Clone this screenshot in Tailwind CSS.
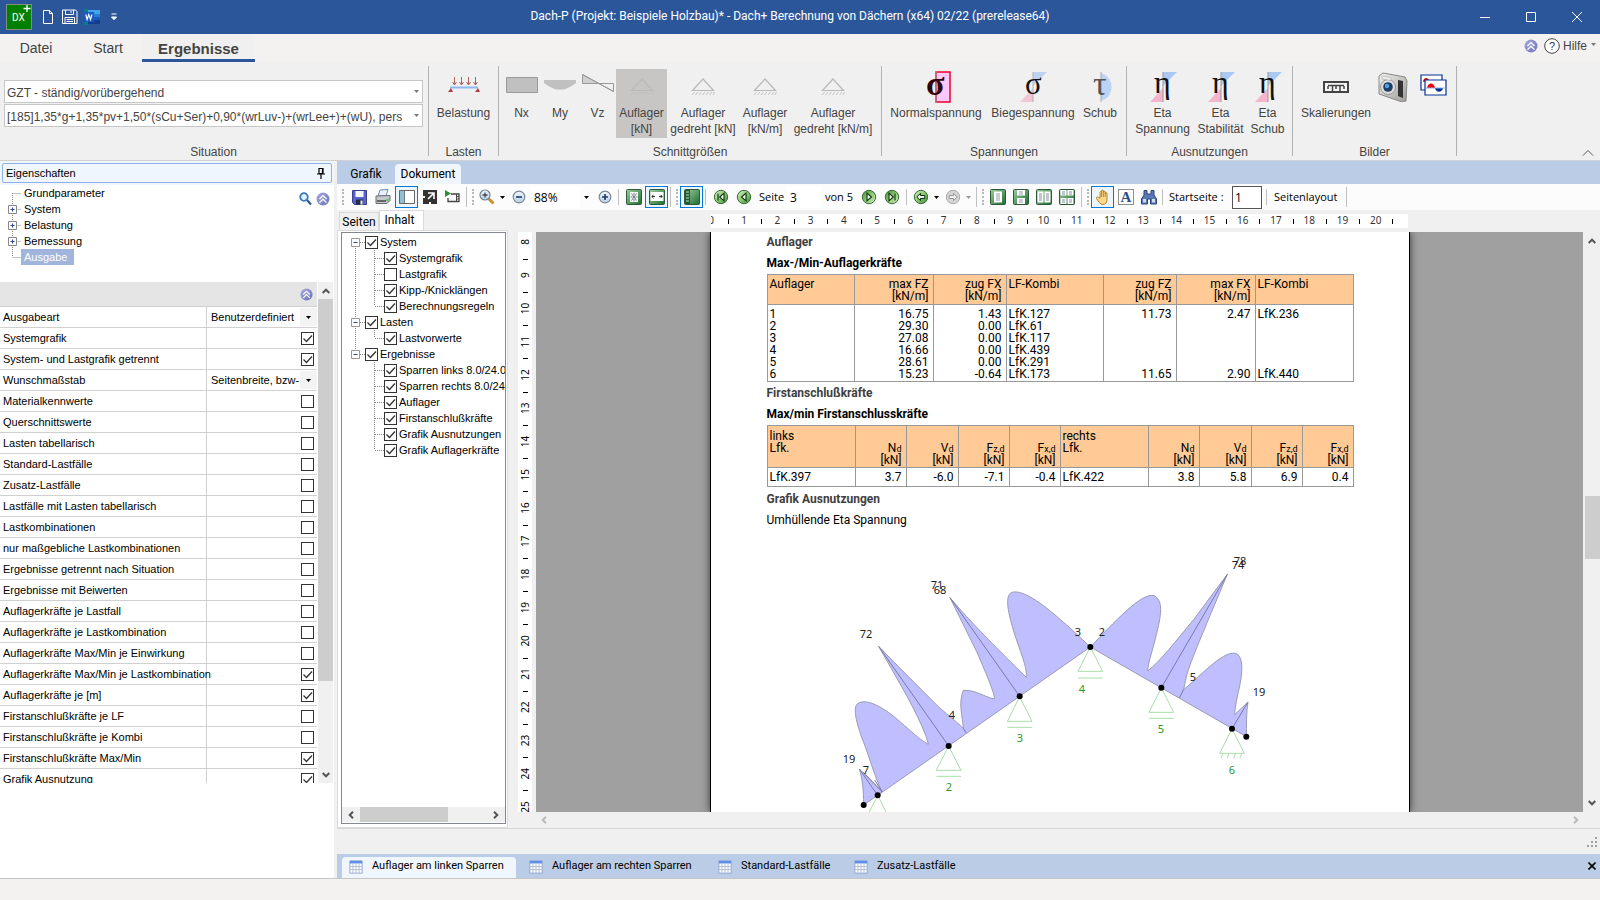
<!DOCTYPE html>
<html lang="de">
<head>
    <meta charset="UTF-8">
    <meta name="viewport" content="width=device-width, initial-scale=1.0">
    <script src="https://cdn.jsdelivr.net/npm/@tailwindcss/browser@4"></script>
    <title>Dach-P - Dach+ Berechnung von Dächern</title>
</head>
<body class="h-screen flex flex-col overflow-hidden bg-[#f0f0f0] font-['Roboto','Liberation_Sans',sans-serif] text-[11px] text-black">

    <!-- Icon definitions -->
    <svg class="absolute w-0 h-0">
        <defs>
            <linearGradient id="gGreen" x1="0" y1="0" x2="1" y2="1"><stop offset="0" stop-color="#d8f0c8"/><stop offset=".5" stop-color="#8cc870"/><stop offset="1" stop-color="#3f8a3f"/></linearGradient>
            <linearGradient id="gPage" x1="0" y1="0" x2="1" y2="1"><stop offset="0" stop-color="#9ccf9c"/><stop offset="1" stop-color="#1f6b34"/></linearGradient>
            <linearGradient id="gBlue" x1="0" y1="0" x2="1" y2="1"><stop offset="0" stop-color="#a8a8e0"/><stop offset="1" stop-color="#6a76b8"/></linearGradient>
            <linearGradient id="gLens" x1="0" y1="0" x2="0" y2="1"><stop offset="0" stop-color="#f4faff"/><stop offset="1" stop-color="#b4cfe8"/></linearGradient>
            <linearGradient id="gSilver" x1="0" y1="0" x2="1" y2="1"><stop offset="0" stop-color="#f4f4f2"/><stop offset="1" stop-color="#9c9a94"/></linearGradient>
        </defs>
        <symbol id="i-collapse" viewBox="0 0 14 14"><circle cx="7" cy="7" r="6.5" fill="url(#gBlue)"/><path d="M3.5 7 7 3.6 10.5 7M3.5 10.6 7 7.2l3.5 3.4" fill="none" stroke="#fff" stroke-width="1.3"/></symbol>
        <symbol id="i-caret" viewBox="0 0 5 3"><path d="M0 0h5L2.500 3z" fill="currentColor"/></symbol>
        <symbol id="i-up" viewBox="0 0 8 6"><path d="M.7 5 4 1.700 7.300 5" fill="none" stroke="currentColor" stroke-width="2"/></symbol>
        <symbol id="i-support" viewBox="0 0 24 18"><path d="M12 1 1.500 12.500h21z" fill="none" stroke="currentColor" stroke-width="1.200"/><path d="m1 17 2.500-3m1 3L7 14m1 3 2.500-3m1 3 2.500-3m1 3 2.500-3m1 3 2.500-3m1 3 1.500-3" stroke="currentColor" stroke-width=".8"/></symbol>
        <symbol id="i-eta" viewBox="0 0 28 32"><path d="M14 1h14L14 15z" fill="#a9c8f2"/><path d="M14 17v14H1z" fill="#f5b4cb"/><path d="M14 1v30" stroke="#999" stroke-width="1"/></symbol>
        <symbol id="i-first" viewBox="0 0 16 16"><circle cx="8" cy="8" r="6.700" fill="url(#gGreen)" stroke="#3b6b3b"/><path d="M5 4.500v7M11 4.200v7.600L6.700 8z" fill="#eef8e6" stroke="#0d2f12" stroke-width="1.100"/></symbol>
        <symbol id="i-prev" viewBox="0 0 16 16"><circle cx="8" cy="8" r="6.700" fill="url(#gGreen)" stroke="#3b6b3b"/><path d="M10 4.200v7.600L5.500 8z" fill="#eef8e6" stroke="#0d2f12" stroke-width="1.100"/></symbol>
        <symbol id="i-back" viewBox="0 0 16 16"><circle cx="8" cy="8" r="6.700" fill="url(#gGreen)" stroke="#3b6b3b"/><path d="M3.800 8 7.500 4.400v2.100h4.200v3H7.500v2.100z" fill="#eef8e6" stroke="#0d2f12"/></symbol>
        <symbol id="i-fwd" viewBox="0 0 16 16"><circle cx="8" cy="8" r="6.700" fill="#d4d4d4" stroke="#a8a8a8"/><path d="M12.200 8 8.500 4.400v2.100H4.300v3h4.200v2.100z" fill="#eee" stroke="#999"/></symbol>
        <symbol id="i-round" viewBox="0 0 14 14"><circle cx="7" cy="7" r="5.800" fill="url(#gLens)" stroke="#7d8894" stroke-width="1.200"/></symbol>
        <symbol id="i-page" viewBox="0 0 16 16"><rect x=".5" y=".5" width="15" height="15" rx="1" fill="url(#gPage)" stroke="#2c5a38"/></symbol>
        <symbol id="i-grid" viewBox="0 0 16 16"><path d="M1 1h14v14H1z" fill="#fff" stroke="#8ba0c8"/><path d="M1 1h14v3H1z" fill="#5f8fe8"/><path d="M1 7.500h14M1 11h14M4.500 4.500V15M8 4.500V15M11.500 4.500V15" stroke="#aab8d4"/></symbol>
        <symbol id="i-tick" viewBox="0 0 13 13"><path d="m2.500 6.500 3 3L11 3.500" fill="none" stroke="#333" stroke-width="1.300"/></symbol>
    </svg>

    <!-- Title bar -->
    <header class="h-[34px] shrink-0 flex items-center bg-[#2b579a] text-white">
        <div class="ml-1.5 w-[26px] h-[26px] bg-[#008000] border border-[#7f8f7f] flex">
            <svg viewBox="0 0 24 24" class="w-6 h-6"><text x="5" y="16" font-size="10" fill="#fff" font-family="Roboto">DX</text><path d="M20 0v7M16.500 3.500h7" stroke="#fff" stroke-width="1.300"/></svg>
        </div>
        <button class="ml-[10px] w-3" aria-label="Neu"><svg viewBox="0 0 12 16" class="w-3 h-4"><path d="M1.500 1.500h6l3 3v10h-9zM7.500 1.500v3h3" fill="none" stroke="#fff"/></svg></button>
        <button class="ml-2 w-4" aria-label="Speichern"><svg viewBox="0 0 16 16" class="w-4 h-4"><path d="M.5 1h13l1.500 1.500V14.500H.5zM3.500 1v4.500h8V1M3 14.500V8.500h9.500v6M4.500 10.500h6.500M4.500 12.500h6.500M9 2v2" fill="none" stroke="#fff"/></svg></button>
        <button class="ml-1.5 w-4" aria-label="Word"><svg viewBox="0 0 16 16" class="w-4 h-4"><path d="M4 1h12v4H4z" fill="#41a5ee"/><path d="M4 5h12v3H4z" fill="#2b7cd3"/><path d="M4 8h12v3H4z" fill="#185abd"/><path d="M4 11h12v4H4z" fill="#103f91"/><path d="M0 0h4v16H0z" fill="#0a7d8c"/><path d="M0 3h10v10H0z" fill="#185abd"/><path d="m1.800 5.500 1.300 5 1.700-5 1.700 5 1.400-5" fill="none" stroke="#fff" stroke-width="1.200"/></svg></button>
        <button class="ml-[10px] w-2" aria-label="Mehr"><svg viewBox="0 0 8 8" class="w-2 h-2"><path d="M1.500 1h5M1.500 4h5L4 6.700z" fill="#fff" stroke="#fff"/></svg></button>
        <h1 class="flex-1 text-center text-[12px] leading-4 pb-0.5">Dach-P (Projekt: Beispiele Holzbau)* - Dach+ Berechnung von Dächern (x64) 02/22 (prerelease64)</h1>
        <button class="w-[46px] flex justify-center" aria-label="Minimieren"><svg viewBox="0 0 10 10" class="w-[10px] h-[10px]"><path d="M0 5.500h10" stroke="#fff"/></svg></button>
        <button class="w-[46px] flex justify-center" aria-label="Maximieren"><svg viewBox="0 0 10 10" class="w-[10px] h-[10px]"><path d="M.5.5h9v9h-9z" fill="none" stroke="#fff"/></svg></button>
        <button class="w-[46px] flex justify-center" aria-label="Schließen"><svg viewBox="0 0 10 10" class="w-[10px] h-[10px]"><path d="m0 0 10 10M10 0 0 10" stroke="#fff"/></svg></button>
    </header>

    <!-- Ribbon tabs -->
    <nav class="h-7 shrink-0 flex bg-[#f3f2f1] text-[#444] text-[14px] leading-7 font-['Liberation_Sans',sans-serif]">
        <button class="ml-[5px] w-[62px] h-7">Datei</button>
        <button class="ml-[10px] w-[62px] h-7">Start</button>
        <button class="ml-[3px] w-[113px] h-7 bg-[#f0f0f0] border-b-3 border-[#2b579a] font-bold text-[15px] leading-[25px] pt-0.5">Ergebnisse</button>
        <div class="ml-auto h-6 flex items-center text-[12px]">
            <svg class="w-[14px] h-[14px] mr-1.5"><use href="#i-collapse"/></svg>
            <svg viewBox="0 0 16 16" class="w-4 h-4 mr-[3px]"><circle cx="8" cy="8" r="7.300" fill="#fff" stroke="#444"/><text x="8" y="12" font-size="11" text-anchor="middle" fill="#333" font-family="Liberation Sans">?</text></svg>
            <button class="flex items-center">Hilfe<svg class="w-[5px] h-[3px] ml-1 mr-1 mb-1 text-[#777]"><use href="#i-caret"/></svg></button>
        </div>
    </nav>

    <!-- Ribbon -->
    <section class="h-[99px] shrink-0 flex border-b border-[#d0d0d0] text-[#444] text-[12px] leading-4 text-center font-['Liberation_Sans',sans-serif]">
        <div class="w-[428px] flex flex-col pt-[18px] pl-1 pr-[5px]">
            <div class="relative h-[23px]">
                <select aria-label="Bemessungssituation" class="appearance-none w-full h-[23px] pl-0.5 pr-4 pt-0.5 bg-white border border-[#c6c6c6] text-[#444]"><option>GZT - ständig/vorübergehend</option></select>
                <svg class="absolute right-1 top-[10px] w-[5px] h-[3px] text-[#777]"><use href="#i-caret"/></svg>
            </div>
            <div class="relative mt-px h-[23px]">
                <select aria-label="Lastfallkombination" class="appearance-none w-full h-[23px] pl-0.5 pr-4 pt-0.5 bg-white border border-[#c6c6c6] text-[#444]"><option>[185]1,35*g+1,35*pv+1,50*(sCu+Ser)+0,90*(wrLuv-)+(wrLee+)+(wU), pers</option></select>
                <svg class="absolute right-1 top-[10px] w-[5px] h-[3px] text-[#777]"><use href="#i-caret"/></svg>
            </div>
            <div class="mt-auto">Situation</div>
        </div>
        <div class="w-px my-1 bg-[#b1b1b1]"></div>
        <div class="w-[69px] flex flex-col pt-[7px]">
            <div class="flex justify-center h-[69px] items-start">
                <button><div class="h-9 flex items-center justify-center pb-1"><svg viewBox="0 0 32 16" class="w-8 h-4"><path d="M2 10.500h28" stroke="#8fb8f0" stroke-width="2"/><path d="M6.500 0v7M13.500 0v7M20.500 0v7M27.500 0v7M4.500 5l2 3 2-3M11.500 5l2 3 2-3M18.500 5l2 3 2-3M25.500 5l2 3 2-3" stroke="#a86060" fill="none"/><path d="m0 15 3-4 2 4zM27 15l3-4 2 4z" fill="#b04040"/></svg></div>Belastung</button>
            </div>
            <div class="mt-auto">Lasten</div>
        </div>
        <div class="w-px my-1 bg-[#b1b1b1]"></div>
        <div class="w-[382px] flex flex-col pt-[7px]">
            <div class="flex pl-[3px] h-[69px] items-start">
                <button class="w-[39px]"><div class="h-9 flex items-center justify-center pb-1"><svg viewBox="0 0 32 16" class="w-8 h-4"><path d="M.5.5h31v15H.5z" fill="#c0c0c0" stroke="#999"/></svg></div>Nx</button>
                <button class="w-[38px]"><div class="h-9 flex items-center justify-center pb-1"><svg viewBox="0 0 32 10" class="w-8 h-[10px]"><path d="M0 0h32v3l-6 4-6 2.500h-8L6 7 0 3z" fill="#c0c0c0"/></svg></div>My</button>
                <button class="w-[37px]"><div class="h-9 flex items-center justify-center pb-2"><svg viewBox="0 0 32 18" class="w-8 h-[18px]"><path d="M.5.5v9h16z" fill="#d0d0d0"/><path d="M.5.5v9h31v8zM.5.5l31 17" fill="none" stroke="#999"/></svg></div>Vz</button>
                <button class="w-[51px] h-[69px] bg-[#c8c6c4] flex flex-col items-center"><div class="h-9 flex items-center"><svg class="w-6 h-[18px] text-[#bababa]"><use href="#i-support"/></svg></div>Auflager<br>[kN]</button>
                <button class="w-[72px]"><div class="h-9 flex items-center justify-center"><svg class="w-6 h-[18px] text-[#b8b8b8]"><use href="#i-support"/></svg></div>Auflager<br>gedreht [kN]</button>
                <button class="w-[52px]"><div class="h-9 flex items-center justify-center"><svg class="w-6 h-[18px] text-[#b8b8b8]"><use href="#i-support"/></svg></div>Auflager<br>[kN/m]</button>
                <button class="w-[84px]"><div class="h-9 flex items-center justify-center"><svg class="w-6 h-[18px] text-[#b8b8b8]"><use href="#i-support"/></svg></div>Auflager<br>gedreht [kN/m]</button>
            </div>
            <div class="mt-auto">Schnittgrößen</div>
        </div>
        <div class="w-px my-1 bg-[#b1b1b1]"></div>
        <div class="w-[244px] flex flex-col pt-[7px]">
            <div class="flex pl-1 h-[69px] items-start">
                <button class="w-[100px]"><div class="h-9 flex items-center justify-center"><svg viewBox="0 0 28 32" class="w-7 h-8 overflow-visible"><path d="M14 1h14v30H14z" fill="#fcc8f8" stroke="#f00030" stroke-width="1.500"/><path d="M14 0v32" stroke="#999"/><text x="4" y="24" font-size="34" font-weight="bold" fill="#300008" font-family="Liberation Serif">σ</text></svg></div>Normalspannung</button>
                <button class="w-[94px]"><div class="h-9 flex items-center justify-center"><svg viewBox="0 0 28 32" class="w-7 h-8 overflow-visible"><g opacity=".7"><use href="#i-eta" width="28" height="32"/></g><text x="6" y="23" font-size="31" fill="#111" font-family="Liberation Serif">σ</text></svg></div>Biegespannung</button>
                <button class="w-10"><div class="h-9 flex items-center justify-center"><svg viewBox="0 0 24 32" class="w-6 h-8 overflow-visible"><path d="M13 2c14 4 14 24 0 28z" fill="#bcd4f4"/><path d="M13 1v30" stroke="#aaa"/><text x="5" y="24" font-size="34" fill="#555" font-family="Liberation Serif">τ</text></svg></div>Schub</button>
            </div>
            <div class="mt-auto">Spannungen</div>
        </div>
        <div class="w-px my-1 bg-[#b1b1b1]"></div>
        <div class="w-[165px] flex flex-col pt-[7px]">
            <div class="flex justify-center h-[69px] items-start">
                <button class="w-[60px]"><div class="h-9 flex items-center justify-center"><svg viewBox="0 0 28 32" class="w-7 h-8 overflow-visible"><use href="#i-eta" width="28" height="32"/><text x="5" y="22" font-size="32" fill="#111" font-family="Liberation Serif">η</text></svg></div>Eta<br>Spannung</button>
                <button class="w-[56px]"><div class="h-9 flex items-center justify-center"><svg viewBox="0 0 28 32" class="w-7 h-8 overflow-visible"><use href="#i-eta" width="28" height="32"/><text x="5" y="22" font-size="32" fill="#111" font-family="Liberation Serif">η</text></svg></div>Eta<br>Stabilität</button>
                <button class="w-[38px]"><div class="h-9 flex items-center justify-center"><svg viewBox="0 0 28 32" class="w-7 h-8 overflow-visible"><use href="#i-eta" width="28" height="32"/><text x="5" y="22" font-size="32" fill="#111" font-family="Liberation Serif">η</text></svg></div>Eta<br>Schub</button>
            </div>
            <div class="mt-auto">Ausnutzungen</div>
        </div>
        <div class="w-px my-1 bg-[#b1b1b1]"></div>
        <div class="w-[163px] flex flex-col pt-[7px]">
            <div class="flex pl-1.5 h-[69px] items-start">
                <button class="w-[74px]"><div class="h-9 flex items-center justify-center"><svg viewBox="0 0 26 12" class="w-[26px] h-3"><path d="M1 1h24v10H1z" fill="#f4f4f4" stroke="#444" stroke-width="2"/><path d="M5 4.500h16M9.500 5v6M13 5v3M17 5v6M5 5v3M21 5v3" stroke="#444" stroke-width="1.500"/></svg></div>Skalierungen</button>
                <button class="w-10" aria-label="Kamera"><div class="h-9 flex items-center justify-center"><svg viewBox="0 0 30 30" class="w-[30px] h-[30px]"><path d="m1 4 4-3 22 4 2 4-1 20-4 1L1 22z" fill="url(#gSilver)" stroke="#888"/><path d="m20 8 5 1v17l-5-2z" fill="#333"/><circle cx="10" cy="15" r="7.500" fill="#ddd" stroke="#999"/><circle cx="10" cy="15" r="4.800" fill="#1d3f66"/><circle cx="9" cy="14" r="2.200" fill="#58a0e0"/><path d="m4 4 9 1.500v3L4 7z" fill="#eee" stroke="#aaa" stroke-width=".6"/></svg></div></button>
                <button class="w-10" aria-label="Bilder"><div class="h-9 flex items-center justify-center pb-1"><svg viewBox="0 0 27 22" class="w-[27px] h-[22px]"><path d="M1 1h21v15H1z" fill="#fff" stroke="#003098" stroke-width="1.200"/><path d="M3 8c0-5 6-5 6-1z" fill="#f00000"/><path d="M5 6h21v15H5z" fill="#fff" stroke="#003098" stroke-width="1.200"/><path d="M7 14c1-6 7-6 8 0z" fill="#f00000"/><path d="M15 14c1 5 7 5 8 0z" fill="#003098"/><path d="M6 14h19" stroke="#90b0e8"/></svg></div></button>
            </div>
            <div class="mt-auto">Bilder</div>
        </div>
        <div class="w-px my-1 bg-[#b1b1b1]"></div>
        <button class="ml-auto mt-auto mb-1 mr-1.5" aria-label="Menüband einklappen"><svg viewBox="0 0 12 6" class="w-3 h-1.5"><path d="m1 5.500 5-5 5 5" fill="none" stroke="#555"/></svg></button>
    </section>

    <!-- Main area -->
    <main class="flex-1 min-h-0 flex">

        <!-- Properties panel -->
        <aside class="w-[334px] shrink-0 bg-white flex flex-col font-['Liberation_Sans',sans-serif]">
            <div class="h-6 p-0.5 bg-[#f0f6fd]">
                <h2 class="h-5 pl-[3px] pr-1.5 flex items-center justify-between border border-[#8db2e3] rounded-xs bg-[#f0f6fe]">Eigenschaften
                    <svg viewBox="0 0 8 11" class="w-2 h-[11px]"><path d="M2 .5h4v5H2zM0 6h8M4 6v5M5.500.5v5" fill="none" stroke="#000" stroke-width="1.200"/></svg>
                </h2>
            </div>
            <div class="h-[97px] flex justify-between items-start">
                <ul class="leading-4 ml-3" id="navTree"></ul>
                <div class="flex gap-1 mt-1.5 mr-1 pt-px">
                    <svg viewBox="0 0 13 14" class="w-[13px] h-[14px]"><circle cx="5" cy="5" r="3.800" fill="#e8f4fc" stroke="#3a78c0" stroke-width="1.800"/><path d="m8 8 4 4.500" stroke="#2a5a98" stroke-width="2.200"/></svg>
                    <svg class="w-[14px] h-[14px]"><use href="#i-collapse"/></svg>
                </div>
            </div>
            <div class="h-[501px] flex justify-between">
                <div class="w-[317px] overflow-hidden">
                    <div class="h-[25px] bg-[#e5e5e5] border-b border-[#d0d0d0] flex items-center justify-end pr-1"><svg class="w-[13px] h-[13px]"><use href="#i-collapse"/></svg></div>
                    <div id="props"></div>
                </div>
                <div class="w-[15px] mr-px bg-[#f0f0f0] flex flex-col items-center">
                    <div class="h-[17px] flex items-center text-[#555]"><svg class="w-2 h-1.5"><use href="#i-up"/></svg></div>
                    <div class="h-[382px] w-full bg-[#cdcdcd]"></div>
                    <div class="mt-auto h-[15px] flex items-center text-[#555] rotate-180"><svg class="w-2 h-1.5"><use href="#i-up"/></svg></div>
                </div>
            </div>
        </aside>

        <!-- Document area -->
        <section class="ml-[3px] flex-1 min-w-0 flex flex-col">
            <div class="h-[23px] shrink-0 bg-[#bbcde6] flex items-end text-[12px] leading-5">
                <button class="w-[58px] h-5">Grafik</button>
                <button class="w-[66px] h-5 bg-[#f0f6fd] rounded-t-sm">Dokument</button>
            </div>

            <!-- Toolbar -->
            <div class="h-[26px] shrink-0 flex items-center bg-[#fcfcfc] text-[11px] font-['Open_Sans',sans-serif]" id="toolbar">
                <div class="w-[11px] flex justify-center"><div class="h-4 border-l-2 border-dotted border-[#b8b8b8]"></div></div>
                <button class="w-[23px] h-[22px] flex items-center justify-center" aria-label="Speichern"><svg viewBox="0 0 15 15" class="w-[15px] h-[15px]"><path d="M.5.5h14v14h-12l-2-2z" fill="#5a64c8" stroke="#3a3f90"/><path d="M3.500 1h8v6h-8z" fill="#f4f6ff"/><path d="M4 9.500h7v5H4z" fill="#222a50"/><path d="M8.500 10.500h2v4h-2z" fill="#eee"/></svg></button>
                <button class="w-[23px] h-[22px] flex items-center justify-center" aria-label="Drucken"><svg viewBox="0 0 16 16" class="w-4 h-4"><path d="m5 1 8-.5L11 7H3z" fill="#e8f0fc" stroke="#7888a8"/><path d="m1 7 14-.5v5l-3 3H1z" fill="#c4c8cc" stroke="#666c74"/><path d="M2 11h9v2H2z" fill="#666"/><circle cx="12.500" cy="11" r="1.300" fill="#50c050"/></svg></button>
                <button class="ml-px w-[23px] h-[22px] flex items-center justify-center bg-[#eef6fd] border border-[#0078d7]" aria-label="Seitenleiste"><svg viewBox="0 0 16 14" class="w-4 h-[14px]"><path d="M.5.5h15v13H.5z" fill="#fff" stroke="#666"/><path d="M1 1h4v12H1z" fill="#90c0d8"/><path d="M5.500 1v12" stroke="#777"/></svg></button>
                <button class="w-[23px] h-[22px] flex items-center justify-center" aria-label="Exportieren"><svg viewBox="0 0 14 14" class="w-[14px] h-[14px]"><path d="M0 0h14v14H0z" fill="#333"/><path d="M5 3h6v6M10.500 3.500 5 9" fill="none" stroke="#fff" stroke-width="1.600"/><path d="M0 6h2v2H0zM6 12h2v2H6z" fill="#fff"/></svg></button>
                <button class="w-[23px] h-[22px] flex items-center justify-center" aria-label="Abspielen"><svg viewBox="0 0 15 14" class="w-[15px] h-[14px]"><path d="M6 4h8v7.500H3V8" fill="none" stroke="#444" stroke-width="1.300"/><path d="M11.500 4v7.500M12 6.500h2M12 9h2" stroke="#444"/><path d="m0 0 6 3.500L0 7z" fill="#2f8a3a"/></svg></button>
                <div class="w-[4px] h-5 border-l border-[#c0c0c0] ml-[2px]"></div>
                <div class="w-[5px] flex justify-center"><div class="h-4 border-l-2 border-dotted border-[#b8b8b8]"></div></div>
                <button class="w-[23px] h-[22px] flex items-center justify-center" aria-label="Lupe"><svg viewBox="0 0 16 16" class="w-4 h-4"><path d="m9.500 9.500 5 5" stroke="#c89030" stroke-width="3"/><circle cx="6" cy="6" r="5" fill="url(#gLens)" stroke="#77828e" stroke-width="1.200"/><path d="M3.500 6h5M6 3.500v5" stroke="#445" stroke-width="1.300"/></svg></button>
                <svg class="w-[5px] h-[3px] mx-[2px]"><use href="#i-caret"/></svg>
                <button class="w-[23px] h-[22px] flex items-center justify-center" aria-label="Verkleinern"><svg viewBox="0 0 14 14" class="w-[14px] h-[14px]"><use href="#i-round"/><path d="M4 7h6" stroke="#223a66" stroke-width="1.600"/></svg></button>
                <input aria-label="Zoom" value="88%" class="ml-px w-[49px] h-[22px] pl-[3px] bg-white text-[12px]">
                <svg class="w-[5px] h-[3px] mx-1"><use href="#i-caret"/></svg>
                <button class="w-[23px] h-[22px] flex items-center justify-center" aria-label="Vergrößern"><svg viewBox="0 0 14 14" class="w-[14px] h-[14px]"><use href="#i-round"/><path d="M4 7h6M7 4v6" stroke="#223a66" stroke-width="1.600"/></svg></button>
                <div class="w-px h-4 bg-[#c0c0c0] mx-[2px]"></div>
                <button class="ml-px w-[23px] h-[22px] flex items-center justify-center" aria-label="Ganze Seite"><svg viewBox="0 0 16 16" class="w-4 h-4"><use href="#i-page"/><path d="M4 3h8v10H4z" fill="#f4faf4"/><path d="M5.500 4.500 10.500 11.500M10.500 4.500l-5 7M8 3.800v2M8 10v2.200M4.500 8h2M9.500 8h2" stroke="#456" stroke-width=".8"/></svg></button>
                <button class="w-[23px] h-[22px] flex items-center justify-center bg-[#eef6fd] border border-[#0078d7]" aria-label="Seitenbreite"><svg viewBox="0 0 16 16" class="w-4 h-4"><use href="#i-page"/><path d="M1.500 3h13v9h-13z" fill="#fff"/><path d="M3 7.500h3M10 7.500h3M4.500 5.800 2.800 7.500l1.700 1.700M11.500 5.800l1.700 1.700-1.700 1.700" fill="none" stroke="#333"/></svg></button>
                <div class="w-[4px] h-5 border-l border-[#c0c0c0] ml-[2px]"></div>
                <div class="w-[6px] flex justify-center"><div class="h-4 border-l-2 border-dotted border-[#b8b8b8]"></div></div>
                <button class="w-[23px] h-[22px] flex items-center justify-center bg-[#eef6fd] border border-[#0078d7]" aria-label="Navigation"><svg viewBox="0 0 16 16" class="w-4 h-4"><use href="#i-page"/><path d="M1 1h5v14H1z" fill="#245a38"/><path d="M2 3h3M2 6h3M2 9h3M2 12h3" stroke="#bfe0c0"/></svg></button>
                <div class="w-px h-4 bg-[#c0c0c0] mx-[2px]"></div>
                <button class="ml-px w-[23px] h-[22px] flex items-center justify-center" aria-label="Erste Seite"><svg class="w-4 h-4"><use href="#i-first"/></svg></button>
                <button class="w-[23px] h-[22px] flex items-center justify-center" aria-label="Vorherige Seite"><svg class="w-4 h-4"><use href="#i-prev"/></svg></button>
                <label for="pageNo" class="w-8 pl-1">Seite</label>
                <input id="pageNo" value="3" class="w-[34px] h-[22px] pl-[3px] bg-white text-[12px]">
                <span class="w-9 pl-1">von 5</span>
                <button class="ml-px w-[23px] h-[22px] flex items-center justify-center rotate-180" aria-label="Nächste Seite"><svg class="w-4 h-4"><use href="#i-prev"/></svg></button>
                <button class="w-[23px] h-[22px] flex items-center justify-center rotate-180" aria-label="Letzte Seite"><svg class="w-4 h-4"><use href="#i-first"/></svg></button>
                <div class="w-px h-4 bg-[#c0c0c0] mx-[2px]"></div>
                <button class="w-[23px] h-[22px] flex items-center justify-center" aria-label="Zurück"><svg class="w-4 h-4"><use href="#i-back"/></svg></button>
                <svg class="w-[5px] h-[3px] mx-[2px]"><use href="#i-caret"/></svg>
                <button class="w-[23px] h-[22px] flex items-center justify-center" aria-label="Vor"><svg class="w-4 h-4"><use href="#i-fwd"/></svg></button>
                <svg class="w-[5px] h-[3px] mx-[2px] text-[#999]"><use href="#i-caret"/></svg>
                <div class="w-[4px] h-5 border-l border-[#c0c0c0] ml-[3px]"></div>
                <div class="w-[6px] flex justify-center"><div class="h-4 border-l-2 border-dotted border-[#b8b8b8]"></div></div>
                <button class="w-[23px] h-[22px] flex items-center justify-center" aria-label="Einzelseite"><svg viewBox="0 0 16 16" class="w-4 h-4"><use href="#i-page"/><path d="M4 2.500h8v11H4z" fill="#fff"/><path d="M6 5h4M6 7h4M6 9h4M6 11h4" stroke="#99a"/></svg></button>
                <button class="w-[23px] h-[22px] flex items-center justify-center" aria-label="Fortlaufend"><svg viewBox="0 0 16 16" class="w-4 h-4"><use href="#i-page"/><path d="M4 1h8v5.500H4zM4 9h8v6H4z" fill="#fff"/><path d="M6 3h4M6 5h4M6 11h4M6 13h4" stroke="#99a"/></svg></button>
                <button class="w-[23px] h-[22px] flex items-center justify-center" aria-label="Doppelseite"><svg viewBox="0 0 16 16" class="w-4 h-4"><use href="#i-page"/><path d="M1.500 2.500h6v11h-6zM8.500 2.500h6v11h-6z" fill="#fff"/><path d="M3 5h3M3 7h3M3 9h3M3 11h3M10 5h3M10 7h3M10 9h3M10 11h3" stroke="#88a"/></svg></button>
                <button class="w-[23px] h-[22px] flex items-center justify-center" aria-label="Doppelseite fortlaufend"><svg viewBox="0 0 16 16" class="w-4 h-4"><use href="#i-page"/><path d="M1.500 1h6v5.500h-6zM8.500 1h6v5.500h-6zM1.500 9h6v6h-6zM8.500 9h6v6h-6z" fill="#fff"/><path d="M3 3h3M3 5h3M10 3h3M10 5h3M3 11h3M3 13h3M10 11h3M10 13h3" stroke="#88a"/></svg></button>
                <div class="w-[4px] h-5 border-l border-[#c0c0c0] ml-[3px]"></div>
                <div class="w-[6px] flex justify-center"><div class="h-4 border-l-2 border-dotted border-[#b8b8b8]"></div></div>
                <button class="w-[23px] h-[22px] flex items-center justify-center bg-[#eef6fd] border border-[#0078d7]" aria-label="Hand"><svg viewBox="0 0 16 16" class="w-4 h-4"><path d="M5 9V3.500c0-1.300 1.600-1.300 1.600 0V2c0-1.300 1.800-1.300 1.800 0v1c0-1.200 1.800-1.200 1.800 0v1.500c0-1.200 1.800-1.200 1.800 0V11c0 3-2 4.500-4.200 4.500C5 15.500 4 13 1.500 9.500 1 8 2.500 7.500 3.500 8.500z" fill="#ffd888" stroke="#a87828" stroke-width=".9"/><path d="M6.600 3.500V8M8.400 3v5M10.200 4v4" stroke="#a87828" stroke-width=".8"/></svg></button>
                <button class="w-[23px] h-[22px] flex items-center justify-center" aria-label="Text auswählen"><svg viewBox="0 0 16 16" class="w-4 h-4"><path d="M.5.5h15v15H.5z" fill="none" stroke="#222" stroke-dasharray="1 1"/><text x="8" y="13" font-size="15" font-weight="bold" text-anchor="middle" fill="#2c4c8c" font-family="Liberation Serif">A</text></svg></button>
                <button class="w-[23px] h-[22px] flex items-center justify-center" aria-label="Suchen"><svg viewBox="0 0 16 16" class="w-4 h-4"><path d="M3 1.500h3V5h4V1.500h3V6l2.500 4v5H9.500v-5h-3v5H.5v-5L3 6z" fill="#5878b8" stroke="#2c4478"/><path d="M2 10h3v3.500H2zM11 10h3v3.500h-3z" fill="#d0dcf4"/></svg></button>
                <div class="w-px h-4 bg-[#c0c0c0] mx-[2px]"></div>
                <label for="startPage" class="ml-1 w-[63px]">Startseite :</label>
                <input id="startPage" value="1" class="w-[30px] h-[23px] pl-0.5 bg-white border border-[#555] text-[12px]">
                <div class="w-px h-4 bg-[#c0c0c0] ml-1"></div>
                <button class="h-[22px] pl-[7px] pr-2">Seitenlayout</button>
                <div class="w-px h-5 bg-[#c0c0c0]"></div>
            </div>

            <div class="flex-1 min-h-0 flex">
                <!-- Contents tree -->
                <div class="w-[171px] shrink-0 flex flex-col">
                    <div class="h-5 flex items-end pl-0.5 text-[12px]">
                        <button class="w-[40px] h-[18px] leading-4 bg-[#f0f0f0] border border-b-0 border-[#d9d9d9]">Seiten</button>
                        <button class="w-[45px] h-5 leading-4 pb-0.5 pr-1 bg-white border border-b-0 border-[#d9d9d9]">Inhalt</button>
                    </div>
                    <div class="flex-1 min-h-0 border border-[#dcdcdc] bg-white pl-[3px] pr-px pt-px pb-[3px]">
                        <div class="h-full border border-[#828790] flex flex-col justify-between overflow-hidden">
                            <ul id="docTree" class="pt-px pl-[9px] leading-4 whitespace-nowrap font-['Liberation_Sans',sans-serif]"></ul>
                            <div class="h-[15px] mb-px flex items-center bg-[#f0f0f0] text-[#555]">
                                <svg class="w-2 h-1.5 mx-[5px] -rotate-90"><use href="#i-up"/></svg>
                                <div class="w-[88px] h-full bg-[#cdcdcd]"></div>
                                <svg class="w-2 h-1.5 ml-auto mr-[5px] rotate-90"><use href="#i-up"/></svg>
                            </div>
                        </div>
                    </div>
                </div>

                <!-- Vertical ruler -->
                <div class="ml-[10px] mr-1 mt-[22px] mb-4 w-[14px] shrink-0 bg-white overflow-hidden"><svg id="rulerY" class="w-[14px] h-[580px]" font-family="Noto Sans" font-size="10"></svg></div>

                <div class="flex-1 min-w-0 flex flex-col">
                    <div class="h-[22px] shrink-0 py-1 mr-[17px]"><svg id="rulerX" class="block mx-auto w-[697px] h-[14px] bg-white" font-family="Noto Sans" font-size="10"></svg></div>
                    <div class="flex-1 min-h-0 flex">
                        <!-- Page view -->
                        <div class="flex-1 min-w-0 mr-px bg-[#a0a0a0] overflow-hidden">
                            <article class="mx-auto w-[700px] h-full bg-white border-x border-black shadow-[0_0_8px_#333] pl-14 pr-[54px] text-[12px] leading-3 overflow-hidden">
                                <h3 class="font-bold leading-[21px] text-[#404040]">Auflager</h3>
                                <h4 class="font-bold leading-[21px]">Max-/Min-Auflagerkräfte</h4>
                                <table class="w-[587px] table-fixed border-collapse border border-[#999] text-right">
                                    <colgroup><col class="w-[87px]"><col class="w-[79px]"><col class="w-[73px]"><col class="w-[97px]"><col class="w-[73px]"><col class="w-[79px]"><col></colgroup>
                                    <thead>
                                        <tr class="h-[30px] bg-[#ffca95] align-top [&>th]:border [&>th]:border-[#999] [&>th]:font-normal [&>th]:px-0.5 [&>th]:pt-[3px]">
                                            <th class="text-left">Auflager</th><th class="pr-1!">max FZ<br>[kN/m]</th><th class="pr-1!">zug FX<br>[kN/m]</th><th class="text-left">LF-Kombi</th><th class="pr-1!">zug FZ<br>[kN/m]</th><th class="pr-1!">max FX<br>[kN/m]</th><th class="text-left">LF-Kombi</th>
                                        </tr>
                                    </thead>
                                    <tbody id="supports" class="[&_td]:border-x [&_td]:border-[#999] [&_td]:px-0.5 [&_tr:first-child>td]:pt-[3px] [&_tr:last-child>td]:pb-px"></tbody>
                                </table>
                                <h3 class="mt-px font-bold leading-[21px] text-[#404040]">Firstanschlußkräfte</h3>
                                <h4 class="font-bold leading-[21px]">Max/min Firstanschlusskräfte</h4>
                                <table class="w-[587px] table-fixed border-collapse border border-[#999] text-right [&_td]:border [&_td]:border-[#999] [&_td]:px-0.5 [&_th]:border [&_th]:border-[#999] [&_th]:font-normal [&_th]:px-0.5">
                                    <colgroup><col class="w-[88px]"><col class="w-[51px]"><col class="w-[52px]"><col class="w-[51px]"><col class="w-[51px]"><col class="w-[88px]"><col class="w-[51px]"><col class="w-[52px]"><col class="w-[51px]"><col></colgroup>
                                    <thead>
                                        <tr class="h-[42px] bg-[#ffca95] [&_sub]:text-[9px] [&_sub]:leading-none [&_sub]:bottom-0">
                                            <th class="text-left align-top pt-1">links<br>Lfk.</th>
                                            <th class="align-bottom pr-1! pb-px">N<sub>d</sub><br>[kN]</th><th class="align-bottom pr-1! pb-px">V<sub>d</sub><br>[kN]</th><th class="align-bottom pr-1! pb-px">F<sub>z,d</sub><br>[kN]</th><th class="align-bottom pr-1! pb-px">F<sub>x,d</sub><br>[kN]</th>
                                            <th class="text-left align-top pt-1">rechts<br>Lfk.</th>
                                            <th class="align-bottom pr-1! pb-px">N<sub>d</sub><br>[kN]</th><th class="align-bottom pr-1! pb-px">V<sub>d</sub><br>[kN]</th><th class="align-bottom pr-1! pb-px">F<sub>z,d</sub><br>[kN]</th><th class="align-bottom pr-1! pb-px">F<sub>x,d</sub><br>[kN]</th>
                                        </tr>
                                    </thead>
                                    <tbody>
                                        <tr class="h-[19px]"><td class="text-left">LfK.397</td><td class="pr-1!">3.7</td><td class="pr-1!">-6.0</td><td class="pr-1!">-7.1</td><td class="pr-1!">-0.4</td><td class="text-left">LfK.422</td><td class="pr-1!">3.8</td><td class="pr-1!">5.8</td><td class="pr-1!">6.9</td><td class="pr-1!">0.4</td></tr>
                                    </tbody>
                                </table>
                                <h3 class="font-bold leading-[21px] mt-0.5 text-[#404040]">Grafik Ausnutzungen</h3>
                                <p class="leading-[21px]">Umhüllende Eta Spannung</p>

                                <!-- Utilisation envelope along both rafters -->
                                <svg class="ml-[53px] mt-[9px] w-[460px] h-[276px]" font-family="Noto Sans" font-size="11" text-anchor="middle">
                                    <g transform="scale(.33333)" stroke-width="3">
                                        <g fill="#bfbfff" stroke="#9a9ab4">
                                            <path d="M131 795C131 750 127 715 118 687L187 756 173 766z"/>
                                            <path d="M187 756C165 715 150 655 130 605C108 550 98 500 113 491C140 472 195 505 240 545C275 575 300 600 325 613C320 585 290 520 245 440L176 319C230 375 300 445 355 500C390 530 415 550 430 565C428 530 414 490 430 451C470 450 490 470 523 477C525 465 505 415 470 335L390 173C450 245 540 335 619 412C622 380 600 335 580 270C562 210 553 160 580 156C625 150 710 225 811 321L173 766z"/>
                                            <path d="M811 321C880 250 965 155 1003 167C1035 185 1020 240 1005 300C994 345 985 365 983 393C1020 365 1070 300 1120 240L1222 103C1190 180 1130 320 1110 375C1095 415 1096 435 1090 450C1150 400 1215 325 1252 342C1275 360 1264 420 1254 460C1246 500 1245 510 1244 524L1284 486C1278 520 1280 560 1279 590z"/>
                                        </g>
                                        <path d="M118 687 173 766M130 697 187 756M164 720l23 36M176 319l210 299M390 173l209 296M430 565l8 13M1222 103 1024 443M1090 450l-12 24M1284 486l-48 80" fill="none" stroke="#7878a8"/>
                                        <g fill="none" stroke="#aadcaa">
                                            <path d="m173 766-37 74h74zM386 618l-37 73h74zM349 709h74M599 470l-37 74h74zM562 562h74M811 321l-37 73h74zM774 414h74M1024 443l-37 74h74zM987 535h74M1236 566l-37 74h74z"/>
                                            <path d="m1208 642-5 12m24-12-5 12m24-12-5 12m24-12-5 12"/>
                                        </g>
                                        <circle cx="131" cy="795" r="9"/><circle cx="173" cy="766" r="9"/><circle cx="386" cy="618" r="9"/><circle cx="599" cy="469" r="9"/><circle cx="811" cy="321" r="9"/><circle cx="1024" cy="443" r="9"/><circle cx="1236" cy="566" r="9"/><circle cx="1279" cy="590" r="9"/>
                                    </g>
                                    <g fill="#222">
                                        <text x="29" y="223">19</text><text x="46" y="234">7</text><text x="46" y="98">72</text><text x="132" y="179">4</text>
                                        <text x="117" y="49">71</text><text x="120" y="54">68</text><text x="258" y="96">3</text><text x="282" y="96">2</text>
                                        <text x="420" y="25">78</text><text x="418" y="29">74</text><text x="373" y="141">5</text><text x="439" y="156">19</text>
                                    </g>
                                    <g fill="#2a9a2a">
                                        <text x="129" y="251">2</text><text x="200" y="202">3</text><text x="262" y="153">4</text><text x="341" y="193">5</text><text x="412" y="234">6</text>
                                    </g>
                                </svg>
                            </article>
                        </div>
                        <div class="w-4 flex flex-col items-center text-[#555]">
                            <div class="h-[18px] flex items-center"><svg class="w-2 h-1.5"><use href="#i-up"/></svg></div>
                            <div class="mt-[246px] h-[63px] w-[15px] bg-[#cdcdcd]"></div>
                            <div class="mt-auto h-[18px] flex items-center rotate-180"><svg class="w-2 h-1.5"><use href="#i-up"/></svg></div>
                        </div>
                    </div>
                    <div class="h-4 flex items-center justify-between pl-1 pr-5 text-[#bbb]">
                        <svg class="w-2 h-1.5 -rotate-90"><use href="#i-up"/></svg>
                        <svg class="w-2 h-1.5 rotate-90"><use href="#i-up"/></svg>
                    </div>
                </div>
            </div>

            <div class="h-[26px] shrink-0 border-t border-[#d7d7d7] flex items-center justify-end pr-[3px]">
                <svg viewBox="0 0 10 10" class="w-[10px] h-[10px]"><path d="M8 0h2v2H8zM4 4h2v2H4zM8 4h2v2H8zM0 8h2v2H0zM4 8h2v2H4zM8 8h2v2H8z" fill="#a0a0a0"/></svg>
            </div>

            <!-- Result tabs -->
            <div class="h-6 shrink-0 bg-[#bbcde6] flex items-end pl-[5px]">
                <button class="h-[21px] w-[174px] pl-1.5 pb-0.5 flex items-center gap-2 bg-[#f0f6fd] rounded-t-sm"><svg class="w-4 h-[14px]"><use href="#i-grid"/></svg>Auflager am linken Sparren</button>
                <button class="h-[21px] w-[189px] pl-3 pb-0.5 flex items-center gap-2"><svg class="w-4 h-[14px]"><use href="#i-grid"/></svg>Auflager am rechten Sparren</button>
                <button class="h-[21px] w-[136px] pl-3 pb-0.5 flex items-center gap-2"><svg class="w-4 h-[14px]"><use href="#i-grid"/></svg>Standard-Lastfälle</button>
                <button class="h-[21px] pl-3 pb-0.5 flex items-center gap-2"><svg class="w-4 h-[14px]"><use href="#i-grid"/></svg>Zusatz-Lastfälle</button>
                <button class="ml-auto mr-1 mb-2" aria-label="Leiste schließen"><svg viewBox="0 0 8 8" class="w-2 h-2"><path d="m.5.5 7 7M7.500.5l-7 7" stroke="#000" stroke-width="1.600"/></svg></button>
            </div>
        </section>
    </main>

    <!-- Status bar -->
    <footer class="h-[22px] shrink-0 bg-[#f3f2f1] border-t border-[#c6c6c6]"></footer>

    <script>
        const checkbox = (id, on) => `
            <span class="relative block w-[13px] h-[13px] shrink-0">
                <input type="checkbox" id="${id}" ${on ? "checked" : ""} class="peer appearance-none block w-[13px] h-[13px] bg-white border border-[#333]">
                <svg class="absolute inset-0 w-[13px] h-[13px] pointer-events-none hidden peer-checked:block"><use href="#i-tick"/></svg>
            </span>`;

        // Navigation tree on the left
        const navItems = [["Grundparameter", false], ["System", true], ["Belastung", true], ["Bemessung", true], ["Ausgabe", false]];
        document.getElementById("navTree").innerHTML = navItems.map(([name, plus], i) => `
            <li class="flex h-4">
                <svg viewBox="0 0 13 16" class="w-[13px] h-4 -ml-1">
                    <path d="M4.500 ${i === 0 ? 8 : 0}V${i === navItems.length - 1 ? 8 : 16}M4.500 8.500H13" stroke="#888" stroke-dasharray="1 1" fill="none"/>
                    ${plus ? '<path d="M.5 4.500h8v8h-8z" fill="#fff" stroke="#888"/><path d="M2.500 8.500h4M4.500 6.500v4" stroke="#2a4a9a"/>' : ''}
                </svg>
                <span class="${name === "Ausgabe" ? "h-4 pl-[3px] pr-[7px] bg-[#a0b4dc] text-white" : "pl-[3px]"}">${name}</span>
            </li>`).join("");

        // Property grid
        const props = [
            ["Ausgabeart", "Benutzerdefiniert"], ["Systemgrafik", 1], ["System- und Lastgrafik getrennt", 1], ["Wunschmaßstab", "Seitenbreite, bzw-"],
            ["Materialkennwerte", 0], ["Querschnittswerte", 0], ["Lasten tabellarisch", 0], ["Standard-Lastfälle", 0], ["Zusatz-Lastfälle", 0],
            ["Lastfälle mit Lasten tabellarisch", 0], ["Lastkombinationen", 0], ["nur maßgebliche Lastkombinationen", 0],
            ["Ergebnisse getrennt nach Situation", 0], ["Ergebnisse mit Beiwerten", 0], ["Auflagerkräfte je Lastfall", 0],
            ["Auflagerkräfte je Lastkombination", 0], ["Auflagerkräfte Max/Min je Einwirkung", 0], ["Auflagerkräfte Max/Min je Lastkombination", 1],
            ["Auflagerkräfte je [m]", 1], ["Firstanschlußkräfte je LF", 0], ["Firstanschlußkräfte je Kombi", 0],
            ["Firstanschlußkräfte Max/Min", 1], ["Grafik Ausnutzung", 1]
        ];
        document.getElementById("props").innerHTML = props.map(([name, value], i) => `
            <div class="h-[21px] flex border-b border-[#d0d0d0]">
                <label for="prop${i}" class="w-[207px] shrink-0 pl-[3px] leading-5 border-r border-[#d0d0d0] whitespace-nowrap">${name}</label>
                <div class="flex-1 flex items-center justify-end pl-1 pr-[3px]">${typeof value === "string" ? `
                    <span class="relative flex-1 -mr-[3px]">
                        <select id="prop${i}" class="appearance-none w-full h-5 pt-px"><option>${value}</option></select>
                        <span class="absolute right-0 top-px w-[17px] h-[18px] bg-[#f3f3f3] flex items-center justify-center pointer-events-none"><svg class="w-[5px] h-[3px]"><use href="#i-caret"/></svg></span>
                    </span>` : checkbox("prop" + i, value)}
                </div>
            </div>`).join("");

        // Document contents tree: [label, level, checked, last child]
        const docItems = [
            ["System", 0, 1], ["Systemgrafik", 1, 1], ["Lastgrafik", 1, 0], ["Kipp-/Knicklängen", 1, 1], ["Berechnungsregeln", 1, 1, 1],
            ["Lasten", 0, 1], ["Lastvorwerte", 1, 1, 1],
            ["Ergebnisse", 0, 1, 1], ["Sparren links 8.0/24.0", 1, 1], ["Sparren rechts 8.0/24", 1, 1], ["Auflager", 1, 1],
            ["Firstanschlußkräfte", 1, 1], ["Grafik Ausnutzungen", 1, 1], ["Grafik Auflagerkräfte", 1, 1, 1]
        ];
        document.getElementById("docTree").innerHTML = docItems.map(([name, level, on, last], i) => level === 0 ? `
            <li class="flex h-4 items-center">
                <svg viewBox="0 0 14 16" class="w-[14px] h-4 shrink-0"><path d="M4.500 ${i ? 0 : 8}V${last ? 8 : 16}M9 8.500h5" stroke="#888" stroke-dasharray="1 1"/><path d="M.5 4.500h8v8h-8z" fill="#fff" stroke="#999"/><path d="M2.500 8.500h4" stroke="#2a4a9a"/></svg>
                ${checkbox("doc" + i, on)}<label for="doc${i}" class="pl-0.5">${name}</label>
            </li>` : `
            <li class="flex h-4 items-center">
                <svg viewBox="0 0 33 16" class="w-[33px] h-4 shrink-0"><path d="${i < 7 ? "M4.500 0V16" : ""}M23.500 0V${last ? 8 : 16}M24 8.500h9" stroke="#888" stroke-dasharray="1 1"/></svg>
                ${checkbox("doc" + i, on)}<label for="doc${i}" class="pl-0.5">${name}</label>
            </li>`).join("");

        // Support reactions
        const supports = [
            ["1", "16.75", "1.43", "LfK.127", "11.73", "2.47", "LfK.236"], ["2", "29.30", "0.00", "LfK.61", "", "", ""],
            ["3", "27.08", "0.00", "LfK.117", "", "", ""], ["4", "16.66", "0.00", "LfK.439", "", "", ""],
            ["5", "28.61", "0.00", "LfK.291", "", "", ""], ["6", "15.23", "-0.64", "LfK.173", "11.65", "2.90", "LfK.440"]
        ];
        document.getElementById("supports").innerHTML = supports.map(row =>
            `<tr>${row.map((v, i) => `<td class="${[0, 3, 6].includes(i) ? "text-left" : "pr-1!"}">${v}</td>`).join("")}</tr>`).join("");

        // Rulers, one centimetre is 33.24px at this zoom
        const cm = 33.24;
        let x = "", y = "";
        for (let n = 0; n <= 20; n++) {
            x += `<text x="${n * cm}" y="10" text-anchor="middle" fill="#333">${n}</text><path d="M${Math.round((n + 0.5) * cm)}.5 5v5" stroke="#000"/>`;
        }
        for (let n = 8; n <= 25; n++) {
            const pos = 10 + (n - 8) * cm;
            y += `<text transform="translate(11 ${pos}) rotate(-90)" text-anchor="middle">${n}</text><path d="M5 ${Math.round(pos + cm / 2)}.5h5" stroke="#000"/>`;
        }
        document.getElementById("rulerX").innerHTML = x;
        document.getElementById("rulerY").innerHTML = y;
    </script>
</body>
</html>
